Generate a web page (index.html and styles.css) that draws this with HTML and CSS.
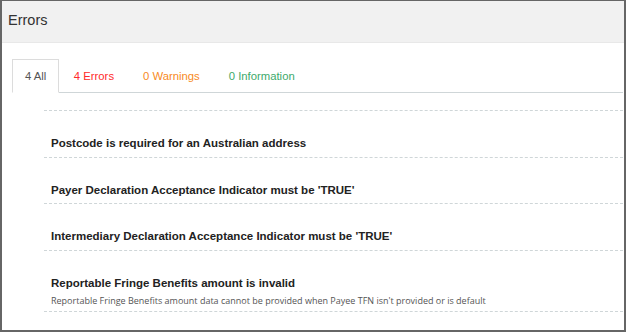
FILE: index.html
```html
<!DOCTYPE html>
<html lang="en">
<head>
  <meta charset="UTF-8" />
  <meta name="viewport" content="width=device-width, initial-scale=1.0"/>
  <title>Errors</title>
  <link rel="stylesheet" href="styles.css">
</head>
<body>
  <div class="panel">
    <div class="panel-header">Errors</div>

    <div class="panel-body">
      <div class="tabs">
        <div class="tab active">4 All</div>
        <div class="tab tab-errors">4 Errors</div>
        <div class="tab tab-warnings">0 Warnings</div>
        <div class="tab tab-info">0 Information</div>
      </div>

      <ul class="messages">
        <li class="message">
          <div class="message-title">Postcode is required for an Australian address</div>
        </li>
        <li class="message">
          <div class="message-title">Payer Declaration Acceptance Indicator must be 'TRUE'</div>
        </li>
        <li class="message">
          <div class="message-title">Intermediary Declaration Acceptance Indicator must be 'TRUE'</div>
        </li>
        <li class="message">
          <div class="message-title">Reportable Fringe Benefits amount is invalid</div>
          <div class="message-detail">Reportable Fringe Benefits amount data cannot be provided when Payee TFN isn't provided or is default</div>
        </li>
      </ul>
    </div>
  </div>
</body>
</html>
```

FILE: styles.css
```css
:root {
  --frame-color: #666;
  --header-bg: #f1f1f1;
  --text-color: #222;
  --line-color: #cfd6d8;
  --red: #ff2b2b;
  --orange: #f78a24;
  --green: #3daa6b;
}

* {
  box-sizing: border-box;
}

body {
  margin: 0;
  font-family: "Liberation Sans", Arial, sans-serif;
  color: var(--text-color);
  background: #fff;
}

.panel {
  width: 626px;
  height: 332px;
  border: 1px solid var(--frame-color);
  border-left-width: 2px;
  border-bottom-width: 2px;
  border-right-width: 2px;
  overflow: hidden;
}

.panel-header {
  height: 42px;
  padding-left: 6px;
  line-height: 39px;
  font-size: 14.5px;
  color: #333;
  background: var(--header-bg);
  border-bottom: 1px solid #e8e8e8;
}

.panel-body {
  padding: 16px 1px 0 10px;
}

.tabs {
  display: flex;
  height: 34px;
  border-bottom: 1px solid var(--line-color);
}

.tab {
  padding: 0 14.5px;
  line-height: 35px;
  font-size: 11.3px;
}

.tab.active {
  padding: 0 12px;
  line-height: 33px;
  color: #555;
  background: #fff;
  border: 1px solid #dcdcdc;
  border-bottom-color: #fff;
  height: 34px;
}

.tab-errors {
  color: var(--red);
}

.tab-warnings {
  color: var(--orange);
}

.tab-info {
  color: var(--green);
}

.messages {
  list-style: none;
  margin: 17px 0 0 32px;
  padding: 0;
  border-top: 1px dashed var(--line-color);
}

.message {
  padding: 24px 0 5.5px 7px;
  border-bottom: 1px dashed var(--line-color);
}

.message:last-child {
  padding-bottom: 3px;
}

.message-title {
  font-size: 11.5px;
  font-weight: bold;
  line-height: 16px;
}

.message-detail {
  margin-top: 3px;
  font-family: "Open Sans", sans-serif;
  font-size: 9px;
  line-height: 14px;
  color: #555;
}
```
